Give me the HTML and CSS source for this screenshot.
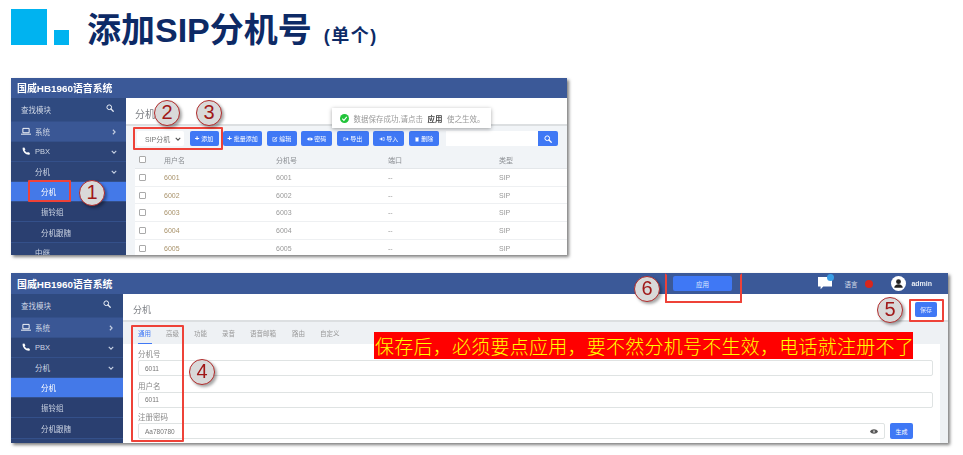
FILE: index.html
```html
<!DOCTYPE html>
<html lang="zh-CN">
<head>
<meta charset="utf-8">
<title>添加SIP分机号</title>
<link rel="stylesheet" href="styles.css">
</head>
<body>
<svg class="defs" width="0" height="0" aria-hidden="true">
  <symbol id="i-search" viewBox="0 0 16 16"><circle cx="6.5" cy="6.5" r="4.7" fill="none" stroke="currentColor" stroke-width="2"/><path d="M10 10l4.5 4.5" stroke="currentColor" stroke-width="2.4" stroke-linecap="round"/></symbol>
  <symbol id="i-laptop" viewBox="0 0 16 12"><path d="M3 1h10v7H3z" fill="none" stroke="currentColor" stroke-width="1.5"/><path d="M0 9.5h16V11H0z" fill="currentColor"/></symbol>
  <symbol id="i-phone" viewBox="0 0 16 16"><path d="M2 1.5l3-.8 2 3.6-1.6 1.6c.8 1.8 2.2 3.2 4.4 4.4l1.6-1.6 3.6 2-.8 3.2C7.500 14.500 1.500 8.500 2 1.500z" fill="currentColor"/></symbol>
  <symbol id="i-right" viewBox="0 0 8 8"><path d="M2.500 1l3 3-3 3" fill="none" stroke="currentColor" stroke-width="1.500"/></symbol>
  <symbol id="i-down" viewBox="0 0 8 8"><path d="M1 2.500l3 3 3-3" fill="none" stroke="currentColor" stroke-width="1.500"/></symbol>
  <symbol id="i-eye" viewBox="0 0 16 10"><path d="M0 5c3-6 13-6 16 0-3 6-13 6-16 0z" fill="currentColor"/><circle cx="8" cy="5" r="2.200" fill="#fff"/><circle cx="8" cy="5" r="1.200" fill="currentColor"/></symbol>
  <symbol id="i-edit" viewBox="0 0 10 10"><path d="M1 2h5v1H2v5h5V6h1v3H1z" fill="currentColor"/><path d="M4 5.500L8 1.500l1 1-4 4H4z" fill="currentColor"/></symbol>
  <symbol id="i-cloud" viewBox="0 0 10 10"><path d="M0 5c2-3.500 8-3.500 10 0-2 3.500-8 3.500-10 0z" fill="currentColor"/><path d="M5 1v8" stroke="#3f78f5" stroke-width="1"/></symbol>
  <symbol id="i-out" viewBox="0 0 10 10"><path d="M1 2h3v1H2v4h2v1H1z" fill="currentColor"/><path d="M4 4h2.500V2.200L9.500 5 6.500 7.800V6H4z" fill="currentColor"/></symbol>
  <symbol id="i-in" viewBox="0 0 10 10"><path d="M6 2h3v6H6V7h2V3H6z" fill="currentColor"/><path d="M1 4h2.500V2.200L6.500 5 3.500 7.800V6H1z" fill="currentColor"/></symbol>
  <symbol id="i-trash" viewBox="0 0 10 10"><path d="M2 1.500h6v1H2zM2.500 3.200h5V9h-5z" fill="currentColor"/></symbol>
</svg>

<div class="slide">
  <header class="heading">
    <div class="marks"><span class="mark-big"></span><span class="mark-small"></span></div>
    <h1 class="title">添加SIP分机号<small class="title-sub">(单个)</small></h1>
  </header>

  <section class="win win-list">
    <div class="topbar"><span class="brand">国威HB1960语音系统</span></div>
    <div class="win-body">
      <nav class="side">
        <div class="side-item side-search"><span>查找模块</span><svg class="ic-search"><use href="#i-search"/></svg></div>
        <div class="side-item side-lvl0"><svg class="ic-lead"><use href="#i-laptop"/></svg><span>系统</span><svg class="ic-arrow"><use href="#i-right"/></svg></div>
        <div class="side-item"><svg class="ic-lead"><use href="#i-phone"/></svg><span>PBX</span><svg class="ic-arrow"><use href="#i-down"/></svg></div>
        <div class="side-item side-sub"><span>分机</span><svg class="ic-arrow"><use href="#i-down"/></svg></div>
        <div class="side-item side-sub2 active"><span>分机</span></div>
        <div class="side-item side-sub2"><span>振铃组</span></div>
        <div class="side-item side-sub2"><span>分机跟随</span></div>
        <div class="side-item side-sub"><span>中继</span></div>
      </nav>
      <main class="main">
        <div class="page-title"><span>分机</span></div>
        <div class="toolbar">
          <div class="select"><span>SIP分机</span><svg class="ic-select"><use href="#i-down"/></svg></div>
          <button class="btn w29"><b>+</b> 添加</button>
          <button class="btn w39"><b>+</b> 批量添加</button>
          <button class="btn w30"><svg class="ic-btn"><use href="#i-edit"/></svg> 编辑</button>
          <button class="btn w31"><svg class="ic-btn"><use href="#i-cloud"/></svg> 密码</button>
          <button class="btn w32"><svg class="ic-btn"><use href="#i-out"/></svg> 导出</button>
          <button class="btn w31"><svg class="ic-btn"><use href="#i-in"/></svg> 导入</button>
          <button class="btn w30"><svg class="ic-btn"><use href="#i-trash"/></svg> 删除</button>
          <div class="search"><span class="search-input"></span><span class="search-btn"><svg class="ic-searchbtn"><use href="#i-search"/></svg></span></div>
        </div>
        <div class="table">
          <div class="row row-head"><span class="check"></span><span>用户名</span><span>分机号</span><span>端口</span><span>类型</span></div>
          <div class="row"><span class="check"></span><span class="tan">6001</span><span>6001</span><span>--</span><span>SIP</span></div>
          <div class="row"><span class="check"></span><span class="tan">6002</span><span>6002</span><span>--</span><span>SIP</span></div>
          <div class="row"><span class="check"></span><span class="tan">6003</span><span>6003</span><span>--</span><span>SIP</span></div>
          <div class="row"><span class="check"></span><span class="tan">6004</span><span>6004</span><span>--</span><span>SIP</span></div>
          <div class="row"><span class="check"></span><span class="tan">6005</span><span>6005</span><span>--</span><span>SIP</span></div>
        </div>
      </main>
    </div>
    <div class="toast">
      <svg class="ic-ok" viewBox="0 0 16 16"><circle cx="8" cy="8" r="8" fill="#22c43a"/><path d="M4 8.200l3 3 5-6" fill="none" stroke="#fff" stroke-width="2"/></svg>
      <span>数据保存成功,请点击</span><b>应用</b><span>使之生效。</span>
    </div>
  </section>

  <section class="win win-form">
    <div class="topbar topbar-form">
      <span class="brand">国威HB1960语音系统</span>
      <button class="apply">应用</button>
      <div class="top-right">
        <span class="chat"><svg viewBox="0 0 16 16" class="ic-chat"><path d="M0 1h16v11H6l-3 3v-3H0z" fill="#fff"/></svg><i class="chat-dot"></i></span>
        <span class="lang">语言</span>
        <i class="flag"></i>
        <span class="avatar"><svg viewBox="0 0 16 16"><circle cx="8" cy="8" r="8" fill="#fff"/><circle cx="8" cy="6" r="2.600" fill="#222"/><path d="M3.500 12.500c0-5 9-5 9 0z" fill="#222"/></svg></span>
        <b class="user">admin</b>
      </div>
    </div>
    <div class="win-body">
      <nav class="side side-form">
        <div class="side-item side-search"><span>查找模块</span><svg class="ic-search"><use href="#i-search"/></svg></div>
        <div class="side-item side-lvl0"><svg class="ic-lead"><use href="#i-laptop"/></svg><span>系统</span><svg class="ic-arrow"><use href="#i-right"/></svg></div>
        <div class="side-item"><svg class="ic-lead"><use href="#i-phone"/></svg><span>PBX</span><svg class="ic-arrow"><use href="#i-down"/></svg></div>
        <div class="side-item side-sub"><span>分机</span><svg class="ic-arrow"><use href="#i-down"/></svg></div>
        <div class="side-item side-sub2 active"><span>分机</span></div>
        <div class="side-item side-sub2"><span>振铃组</span></div>
        <div class="side-item side-sub2"><span>分机跟随</span></div>
      </nav>
      <main class="main">
        <div class="page-title page-title-form"><span>分机</span><button class="save">保存</button></div>
        <div class="panel">
          <div class="tabs">
            <span class="tab on">通用</span><span class="tab">高级</span><span class="tab">功能</span><span class="tab">录音</span><span class="tab">语音邮箱</span><span class="tab">路由</span><span class="tab">自定义</span>
          </div>
          <div class="form">
            <label class="lbl">分机号</label>
            <div class="field"><span>6011</span></div>
            <label class="lbl">用户名</label>
            <div class="field"><span>6011</span></div>
            <label class="lbl">注册密码</label>
            <div class="field-row">
              <div class="field field-grow"><span>Aa780780</span><svg class="ic-eye"><use href="#i-eye"/></svg></div>
              <button class="gen">生成</button>
            </div>
          </div>
        </div>
      </main>
    </div>
  </section>

  <div class="banner">保存后，必须要点应用，要不然分机号不生效，电话就注册不了</div>

  <span class="rbox b1"></span>
  <span class="rbox b23"></span>
  <span class="rbox b4"></span>
  <span class="rbox b5"></span>
  <span class="rbox b6"></span>
  <span class="num n1">1</span>
  <span class="num n2">2</span>
  <span class="num n3">3</span>
  <span class="num n4">4</span>
  <span class="num n5">5</span>
  <span class="num n6">6</span>
</div>
</body>
</html>
```
FILE: styles.css
```css
* { box-sizing: border-box; }
html, body { margin: 0; padding: 0; background: #fff; }
body { font-family: "Liberation Sans", "Noto Sans CJK SC", sans-serif; overflow: hidden; }
.defs { position: absolute; }
button { font-family: inherit; border: 0; padding: 0; margin: 0; }

.slide { position: relative; width: 963px; height: 455px; padding: 9px 15px 0 11px; overflow: hidden; }

/* heading */
.heading { display: flex; align-items: flex-start; height: 69px; }
.marks { display: flex; align-items: flex-end; gap: 7px; width: 76px; height: 36px; }
.mark-big { width: 36px; height: 36px; background: #00b3f0; }
.mark-small { width: 15px; height: 15px; background: #00b3f0; }
.title { margin: 0; font-size: 34px; line-height: 42px; font-weight: 700; color: #0d2a66; white-space: nowrap; }
.title-sub { font-size: 18px; font-weight: 700; margin-left: 12px; letter-spacing: 1.5px; }

/* app windows */
.win { position: relative; background: #fff; box-shadow: 2px 2px 3px rgba(0,0,0,.5); filter: blur(.35px); overflow: hidden; }
.win-list { width: 556px; height: 177px; }
.win-form { width: 937px; height: 170px; margin-top: 18px; }
.topbar { height: 20px; background: #3b5998; display: flex; align-items: center; padding-left: 6px; }
.topbar-form { height: 21px; position: relative; }
.brand { color: #fff; font-weight: 700; font-size: 9.900px; white-space: nowrap; }
.win-body { display: flex; height: calc(100% - 20px); }

/* sidebar */
.side { width: 115px; flex: none; background: #2d4476; color: #cdd5e4; font-size: 7.500px; }
.side-form { width: 112px; }
.side-item { display: flex; align-items: center; height: 20.100px; padding: 0 9px 0 10px; border-bottom: 1px solid #34508a; gap: 4px; }
.side-item span { flex: 1; white-space: nowrap; }
.side-search { height: 24px; background: #2f4a80; padding-right: 12px; }
.side-lvl0 { background: #3a5795; }
.side-sub { padding-left: 24px; }
.side-sub2 { padding-left: 30px; background: #2a3f70; }
.active { background: #4479e8; color: #fff; }
.ic-search { width: 8px; height: 8px; color: #e8edf5; margin-top: -4px; }
.ic-lead { width: 10px; height: 9px; color: #fff; }
.ic-arrow { width: 6px; height: 6px; color: #c6d0e2; }

/* main */
.main { flex: 1; min-width: 0; background: #fff; display: flex; flex-direction: column; }
.page-title { height: 28px; padding: 8px 0 0 9px; font-size: 10px; color: #7c7f84; border-bottom: 2px solid #dcdfe1; flex: none; }
.toolbar { height: 25px; background: #f1f4f7; display: flex; align-items: center; gap: 4.500px; padding-left: 11px; flex: none; }
.select { width: 47px; height: 15px; background: #fff; border-radius: 2px; font-size: 7px; color: #777; display: flex; align-items: center; justify-content: space-between; padding: 0 3px 0 8px; margin-right: 1px; }
.ic-select { width: 6px; height: 6px; color: #555; }
.btn { height: 15px; background: #3f78f5; color: #fff; font-size: 6px; border-radius: 2px; white-space: nowrap; }
.btn b { font-size: 8px; }
.ic-btn { width: 6px; height: 6px; color: #fff; vertical-align: -1px; }
.w29 { width: 29px; } .w30 { width: 30px; } .w31 { width: 31px; } .w32 { width: 32px; } .w39 { width: 39px; }
.search { display: flex; margin-left: 3px; height: 15px; }
.search-input { width: 92px; background: #fff; }
.search-btn { width: 20px; background: #3f78f5; border-radius: 0 2px 2px 0; display: flex; align-items: center; justify-content: center; }
.ic-searchbtn { width: 8px; height: 8px; color: #fff; }

.table { flex: 1; overflow: hidden; background: #f1f4f7; padding-left: 9px; }
.row { display: grid; grid-template-columns: 29px 112px 112px 111px 1fr; align-items: center; height: 17.700px; font-size: 7px; color: #999; background: #fff; border-bottom: 1px solid #eef0f2; }
.row-head { height: 18px; background: #f1f4f7; color: #8a8d92; border-bottom: 1px solid #e4e7ea; }
.check { width: 7px; height: 7px; background: #fff; border: 1px solid #aaa; border-radius: 1px; margin-left: 4px; }
.tan { color: #a8926a; }

/* toast */
.toast { position: absolute; left: 321px; top: 30px; width: 159px; height: 20px; background: #fff; box-shadow: 0 1px 4px rgba(0,0,0,.35); display: flex; align-items: center; gap: 4.500px; padding-left: 8px; font-size: 7.500px; color: #999; white-space: nowrap; }
.toast b { color: #444; }
.ic-ok { width: 9px; height: 9px; flex: none; }

/* form window */
.apply { position: absolute; left: 662px; top: 3px; width: 59px; height: 15px; background: #3f78f5; color: #dfe8ff; font-size: 6.500px; border-radius: 2px; }
.top-right { position: absolute; right: 16px; top: 0; height: 21px; display: flex; align-items: center; }
.chat { position: relative; display: flex; margin: -1px 12px 0 0; }
.ic-chat { width: 14px; height: 14px; }
.chat-dot { position: absolute; right: -2px; top: -2px; width: 7px; height: 7px; border-radius: 50%; background: #3a9fe6; }
.lang { font-size: 6.500px; color: #d6dde9; margin-right: 8px; }
.flag { width: 8px; height: 8px; border-radius: 50%; background: #d8261c; margin-right: 18px; }
.avatar { display: flex; margin-right: 5px; }
.avatar svg { width: 15px; height: 15px; }
.user { color: #e6ebf3; font-size: 7px; }

.page-title-form { display: flex; justify-content: space-between; align-items: flex-start; height: 28px; padding: 9px 11px 0 10px; font-size: 9px; }
.save { width: 22px; height: 15px; margin-top: -1px; background: #3f78f5; color: #dfe8ff; font-size: 6px; border-radius: 2px; }
.panel { flex: 1; background: #eef1f4; padding: 2px 8px 0 0; min-height: 0; }
.tabs { height: 20px; display: flex; gap: 14px; padding-left: 15px; align-items: center; font-size: 6.500px; color: #999; }
.tab { width: 14px; white-space: nowrap; line-height: 20px; height: 20px; }
.tab:nth-child(5) { width: 28px; }
.tab.on { color: #3f78f5; border-bottom: 1px solid #3f78f5; }
.form { background: #fff; padding: 6px 7px 0 15px; height: 100%; font-size: 7.500px; color: #888; }
.lbl { display: block; line-height: 10px; height: 10px; }
.field { display: flex; align-items: center; justify-content: space-between; height: 16px; border: 1px solid #dfe3e3; border-radius: 2px; padding: 0 3px 0 6px; font-size: 6.500px; color: #777; margin: 0 0 5.500px; }
.field-row { display: flex; gap: 5px; margin-right: 20px; }
.field-grow { flex: 1; margin: 0; }
.ic-eye { width: 8px; height: 5px; color: #555; margin-right: 3px; }
.gen { width: 23px; height: 16px; background: #3f78f5; color: #fff; font-size: 6px; border-radius: 2px; }

/* annotations laid over the screenshots */
.banner { position: absolute; left: 374px; top: 332px; width: 539px; height: 27px; background: #ff0000; color: #ffff00; font-family: "Noto Sans CJK SC", sans-serif; font-weight: 300; font-size: 19px; line-height: 27px; letter-spacing: .25px; white-space: nowrap; overflow: hidden; padding-left: 1px; }
.rbox { position: absolute; border: 2px solid #ee4238; border-radius: 1px; }
.b1 { left: 28px; top: 180px; width: 43px; height: 22px; }
.b23 { left: 133px; top: 127px; width: 90px; height: 23px; }
.b4 { left: 131px; top: 325px; width: 53px; height: 117px; }
.b5 { left: 909px; top: 299px; width: 35px; height: 23px; }
.b6 { left: 665px; top: 273px; width: 77px; height: 30px; border-top-color: transparent; }
.num { position: absolute; width: 26px; height: 26px; border-radius: 50%; background: #d9d9d9; border: 1.500px solid #b02a2a; box-shadow: 2px 2px 3px rgba(0,0,0,.35); color: #a01818; font-size: 20px; line-height: 23px; text-align: center; }
.n1 { left: 79px; top: 180px; }
.n2 { left: 154px; top: 100px; }
.n3 { left: 196px; top: 100px; }
.n4 { left: 189px; top: 359px; }
.n5 { left: 877px; top: 297px; }
.n6 { left: 634px; top: 276px; }
```
